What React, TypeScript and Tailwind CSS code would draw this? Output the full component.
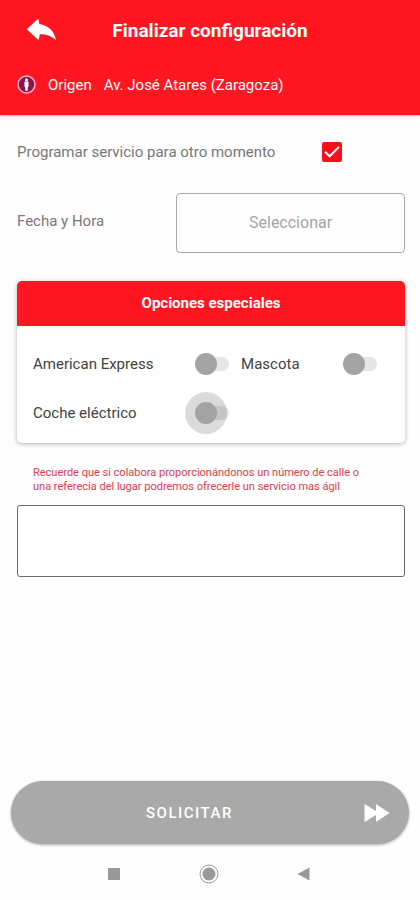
import React, { useState } from "react";

type SwitchProps = {
  id: string;
  label: string;
  pressed?: boolean;
};

const SwitchOption = ({ id, label, pressed = false }: SwitchProps) => {
  const [on, setOn] = useState(false);

  return (
    <div className="flex h-[49px] items-center justify-between">
      <label htmlFor={id} className="text-[15px] leading-5 text-[#424242]">
        {label}
      </label>
      <input
        id={id}
        type="checkbox"
        role="switch"
        checked={on}
        onChange={() => setOn(!on)}
        className={`relative h-[22px] w-[34px] shrink-0 cursor-pointer appearance-none outline-none before:absolute before:top-1 before:right-0 before:h-[14px] before:w-7 before:rounded-full before:bg-[#e6e6e6] after:absolute after:top-0 after:left-0 after:size-[22px] after:rounded-full after:bg-[#a3a3a3] checked:after:left-3 checked:after:bg-[#ff1620] ${
          pressed ? "after:shadow-[0_0_0_10px_rgba(0,0,0,0.14)]" : ""
        }`}
      />
    </div>
  );
};

const App = () => {
  const [scheduled, setScheduled] = useState(true);

  return (
    <div className="flex min-h-screen flex-col bg-[#fefefe] font-['Roboto',sans-serif]">
      {/* Header */}
      <header className="bg-[#ff1620] pb-5 text-white shadow-[0_1px_2px_rgba(255,22,32,0.4)]">
        <div className="grid h-[61px] grid-cols-[56px_1fr_56px] items-center">
          <button type="button" aria-label="Volver" className="ml-[26px] h-6 w-[30px]">
            <svg viewBox="0 0 30 24" className="h-6 w-[30px]" fill="currentColor">
              <path d="M.8 10.200 11.500.300q1-.7 1.200.5L13.300 5C22 6.200 28.300 12 30 21.200 25.500 16.800 20 15 13.700 15.200L13 20q-.2 1.200-1.200.5z" />
            </svg>
          </button>
          <h1 className="text-center text-[19px] leading-6 font-bold">
            Finalizar configuración
          </h1>
        </div>

        <div className="mt-[14px] flex h-5 items-center pl-[17px] text-[15px] leading-5">
          <svg viewBox="0 0 20 20" className="mr-[11px] size-5">
            <circle cx="9.500" cy="9.500" r="8.500" fill="#8a1450" stroke="#f5b5c3" strokeWidth="1.500" />
            <circle cx="9.500" cy="4.800" r="1.500" fill="#fff" />
            <path d="M7.500 6.600h4v5l-.8.900v3.200H8.300v-3.200l-.8-.9z" fill="#fff" />
          </svg>
          <span>Origen</span>
          <span className="ml-3">Av. José Atares (Zaragoza)</span>
        </div>
      </header>

      <main className="flex flex-1 flex-col pt-[27px] pr-[15px] pl-[17px]">
        {/* Schedule */}
        <div className="flex h-5 items-center justify-between pr-[63px]">
          <label htmlFor="programar" className="text-[15px] leading-5 text-[#777]">
            Programar servicio para otro momento
          </label>
          <span className="relative size-5">
            <input
              id="programar"
              type="checkbox"
              checked={scheduled}
              onChange={() => setScheduled(!scheduled)}
              className="peer block size-5 appearance-none rounded-[2px] border-2 border-[#777] checked:border-[#f5101b] checked:bg-[#f5101b]"
            />
            <svg
              viewBox="0 0 20 20"
              className="pointer-events-none absolute inset-0 hidden size-5 peer-checked:block"
              fill="none"
              stroke="#fff"
              strokeWidth="2"
            >
              <path d="M3 9.700 7.600 14.300 17 4.900" />
            </svg>
          </span>
        </div>

        <div className="mt-[31px] flex justify-between">
          <span id="fecha" className="pt-[18px] text-[15px] leading-5 text-[#777]">
            Fecha y Hora
          </span>
          <button
            type="button"
            aria-describedby="fecha"
            className="h-[60px] w-[59%] rounded-[4px] border border-[#a8a8a8] text-[16px] text-[#a6a6a6]"
          >
            Seleccionar
          </button>
        </div>

        {/* Special options */}
        <section className="mt-7 overflow-hidden rounded-[5px] bg-white shadow-[0_1px_5px_rgba(0,0,0,0.3)]">
          <h2 className="bg-[#ff1620] py-3 text-center text-[15px] leading-[21px] font-bold text-white">
            Opciones especiales
          </h2>
          <div className="grid grid-cols-[57%_1fr] gap-x-3 pt-[13px] pr-7 pb-[6px] pl-4">
            <SwitchOption id="amex" label="American Express" />
            <SwitchOption id="mascota" label="Mascota" />
            <SwitchOption id="electrico" label="Coche eléctrico" pressed />
          </div>
        </section>

        {/* Notes */}
        <label
          htmlFor="notas"
          className="mt-[23px] block pr-7 pl-4 text-[11px] leading-[14px] text-[#d8404d]"
        >
          Recuerde que si colabora proporcionándonos un número de calle o{" "}
          <br />
          una referecia del lugar podremos ofrecerle un servicio mas ágil
        </label>
        <textarea
          id="notas"
          className="mt-[11px] block h-[72px] w-full resize-none rounded-[3px] border border-[#6b6b6b] bg-white p-2 text-[15px] outline-none"
        />
      </main>

      <footer className="px-[11px]">
        <button
          type="button"
          className="grid h-[63px] w-full grid-cols-[1fr_45px] items-center rounded-full bg-[#a9a9a9] pl-1 text-white shadow-[0_1px_3px_rgba(0,0,0,0.35)]"
        >
          <span className="text-[15px] leading-5 font-medium tracking-widest">
            SOLICITAR
          </span>
          <svg viewBox="0 0 26 20" className="h-5 w-[26px]" fill="currentColor">
            <path d="M.5 1 12 8V1l13.500 9L12 19v-7L.5 19z" />
          </svg>
        </button>

        {/* System navigation */}
        <nav className="flex h-14 items-center justify-center gap-[75px] pt-1 pr-[2px] text-[#999]">
          <button type="button" aria-label="Recientes">
            <svg viewBox="0 0 20 20" className="size-5" fill="currentColor">
              <path d="M4 4h12v12H4z" />
            </svg>
          </button>
          <button type="button" aria-label="Inicio">
            <svg viewBox="0 0 20 20" className="size-5">
              <circle cx="10" cy="10" r="9" fill="none" stroke="currentColor" />
              <circle cx="10" cy="10" r="6.500" fill="currentColor" />
            </svg>
          </button>
          <button type="button" aria-label="Atrás">
            <svg viewBox="0 0 20 20" className="size-5" fill="currentColor">
              <path d="M3.500 10 15.500 3.500v13z" />
            </svg>
          </button>
        </nav>
      </footer>
    </div>
  );
};

export default App;
